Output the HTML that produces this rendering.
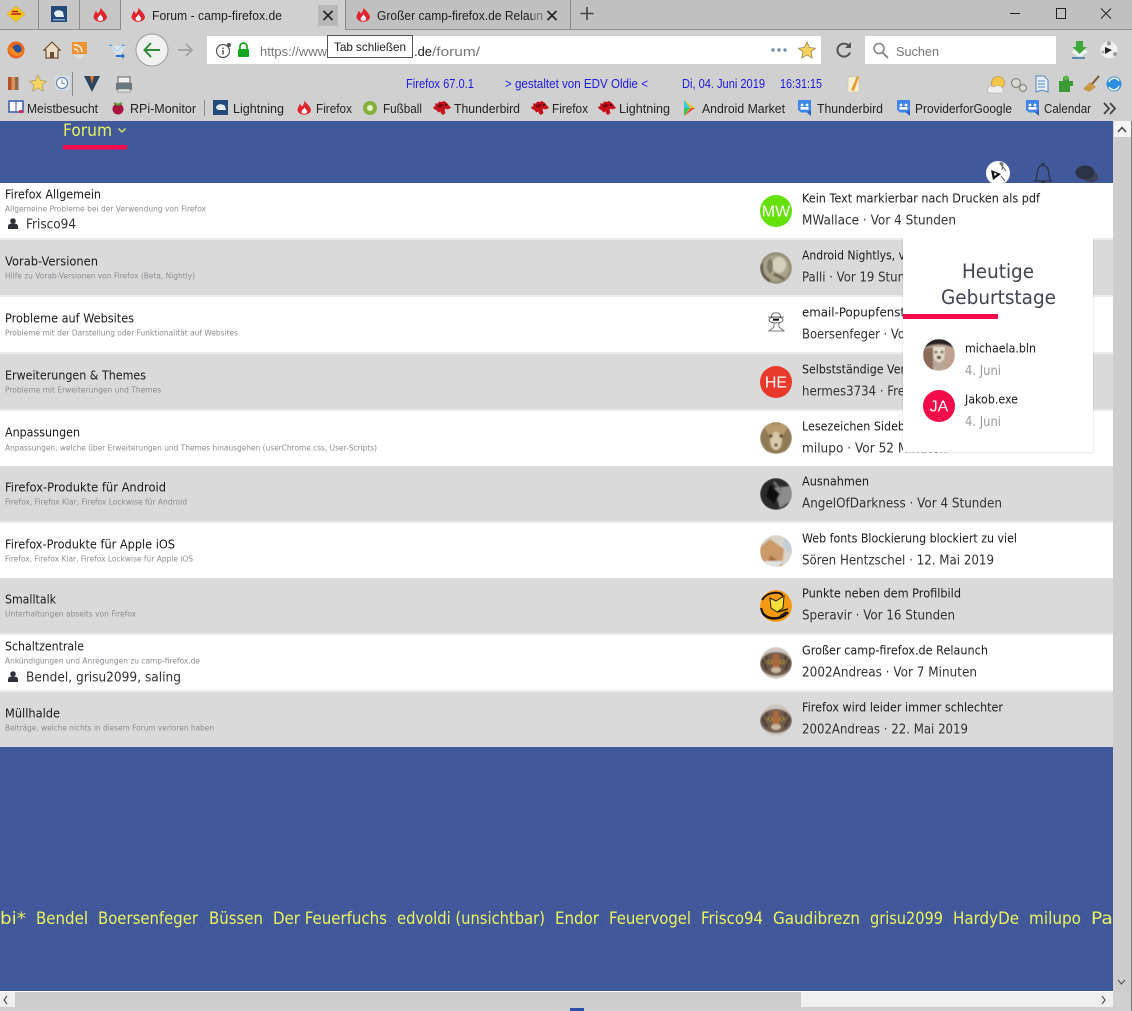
<!DOCTYPE html>
<html lang="de">
<head>
<meta charset="utf-8">
<title>Forum - camp-firefox.de</title>
<style>
html,body{margin:0;padding:0;width:1132px;height:1011px;overflow:hidden;background:#d0d0d0}
svg{display:block}
text{white-space:pre}
.u{font-family:"Liberation Sans",sans-serif;font-size:13px;fill:#222}
.b{font-family:"Liberation Sans",sans-serif;font-size:13px;fill:#1a1ae0}
.t{font-family:"DejaVu Sans",sans-serif;font-size:12px;fill:#1a1a1a;transform:translateY(-.7px)}
.s{font-family:"DejaVu Sans",sans-serif;font-size:8px;fill:#8b8b93;transform:translateY(-.3px)}
.m{font-family:"DejaVu Sans",sans-serif;font-size:13px;fill:#333;transform:translateY(-.5px)}
.y{font-family:"DejaVu Sans",sans-serif;font-size:16.5px;fill:#e9f35f}
.c{font-family:"DejaVu Sans",sans-serif;font-size:8px;fill:#2f3d66}
.a{font-family:"Liberation Sans",sans-serif;font-size:16px;fill:#fff;text-anchor:middle}
.h{font-family:"DejaVu Sans",sans-serif;font-size:19.5px;fill:#3f4450}
.g{font-family:"DejaVu Sans",sans-serif;font-size:13px;fill:#9a9a9a}
</style>
</head>
<body>
<svg width="1132" height="1011" viewBox="0 0 1132 1011" xmlns="http://www.w3.org/2000/svg">
<defs>
<filter id="bl" x="-10%" y="-10%" width="120%" height="120%"><feGaussianBlur stdDeviation=".7"/></filter>
<g id="flame"><path d="M8.500 0C9 3 14.500 5.500 15 10.500A7 6 0 0 1 1.500 10.500C1.500 8 3 6.500 3.500 4C4.800 4.800 5.500 5.800 5.800 6.800C7.500 5 8.500 3 8.500 0Z" fill="#e2222c"/><path d="M8.500 7C9 9 11.200 9.800 11.200 12A3 2.800 0 0 1 5.500 12C5.500 10.200 8 9.200 8.500 7Z" fill="#fff"/></g>
<g id="dino"><path d="M1 9L0 7L2.500 6L2 3.500L5 3.500L6 1.500L8.500 2L11 1L14 3L16 5.500L18 8L14.500 9.500L12.500 8.500L11.500 10L12.500 13L10 15L8 13.500L7.500 11.500L5 12.500L4 10.500Z" fill="#c8101a"/><path d="M4 5L8 4L11 4.500L9 7L6 8Z" fill="#7c0c10"/><circle cx="13" cy="5" r="1" fill="#200"/></g>
<g id="cal"><path d="M0 0H13V15L10 12.500H3L0 10Z" fill="#4285e8"/><path d="M13 10V16L9 12.500Z" fill="#2a62c0"/><circle cx="4" cy="5" r="1.400" fill="#fff"/><circle cx="9" cy="5" r="1.400" fill="#fff"/><rect x="2.500" y="7" width="8" height="2.600" fill="#fff"/></g>
<g id="user"><circle cx="5" cy="3" r="2.800" fill="#2e3038"/><path d="M0 11V8.500C0 6.400 2 5.600 3 5.600H7C8 5.600 10 6.400 10 8.500V11Z" fill="#2e3038"/></g>
<g id="cat"><circle r="16" fill="#cfc8c0"/><ellipse cx="0" cy="1" rx="16" ry="12" fill="#6e5a48"/><path d="M-3 -9L3 -9L4 4L0 9L-4 4Z" fill="#a9683e"/><ellipse cx="-6" cy="-1" rx="2.500" ry="2" fill="#b9a24a"/><ellipse cx="6" cy="-1" rx="2.500" ry="2" fill="#b9a24a"/><circle cx="-6" cy="-1" r="1.200" fill="#111"/><circle cx="6" cy="-1" r="1.200" fill="#111"/><path d="M-14 -3L-9 7M14 -3L9 7M-10 -8L-9 -3M10 -8L9 -3" stroke="#3a2d22" stroke-width="1.500"/><ellipse cx="0" cy="7" rx="5" ry="3" fill="#c9b8a4"/></g>
<clipPath id="ca"><circle cx="0" cy="0" r="16"/></clipPath>
<clipPath id="tp"><rect x="980" y="150" width="40" height="33"/></clipPath>
</defs>

<!-- browser chrome -->
<rect x="0" y="0" width="1132" height="122" fill="#d0d0d0"/>
<rect x="0" y="0" width="1132" height="29" fill="#c0c0c0"/>
<rect x="0" y="29" width="1132" height="1" fill="#8f8f8f"/>
<rect x="0" y="0" width="120" height="29" fill="#c6c6c6"/>
<rect x="38" y="0" width="1" height="29" fill="#8a8a8a"/>
<rect x="79" y="0" width="1" height="29" fill="#8a8a8a"/>
<rect x="120" y="0" width="226" height="30" fill="#d0d0d0"/>
<rect x="120" y="0" width="1" height="30" fill="#8a8a8a"/>
<rect x="345" y="0" width="1" height="30" fill="#8a8a8a"/>
<rect x="570" y="0" width="1" height="29" fill="#8a8a8a"/>
<!-- pinned -->
<path d="M16 6L25 14L16 22L7 14Z" fill="#f4c51e" stroke="#d8a010" stroke-width=".5"/><path d="M11 14H21M12 11.500H18" stroke="#c41a1a" stroke-width="1.600"/>
<rect x="51" y="6" width="16" height="16" fill="#234a78"/><path d="M54 14C54 10 60 9 63 12L64 17H56Z" fill="#e6eef6"/><rect x="53" y="19" width="12" height="1.500" fill="#7fa0c0"/>
<use href="#flame" x="92" y="7"/>
<use href="#flame" x="130" y="7"/>
<text class="u" x="152" y="20" textLength="130" lengthAdjust="spacingAndGlyphs">Forum - camp-firefox.de</text>
<rect x="318" y="5" width="20" height="21" fill="#b8b8b8"/>
<path d="M323.500 11L332.500 20M332.500 11L323.500 20" stroke="#222" stroke-width="1.600"/>
<use href="#flame" x="355" y="7"/>
<text class="u" x="377" y="20" textLength="166" lengthAdjust="spacingAndGlyphs">Großer camp-firefox.de Relaun</text>
<rect x="533" y="6" width="12" height="18" fill="#c0c0c0" opacity=".5"/>
<path d="M547.500 11L556.500 20M556.500 11L547.500 20" stroke="#222" stroke-width="1.600"/>
<path d="M587 7V20M580.500 13.500H593.500" stroke="#444" stroke-width="1.600"/>
<path d="M1010 13.500H1020" stroke="#222" stroke-width="1"/>
<rect x="1056.500" y="8.500" width="9" height="10" fill="none" stroke="#222" stroke-width="1"/>
<path d="M1101 8.500L1111 18.500M1111 8.500L1101 18.500" stroke="#222" stroke-width="1"/>

<!-- toolbar row -->
<circle cx="16" cy="50" r="8.500" fill="#e8671c"/><circle cx="17" cy="49" r="4.500" fill="#27509c"/><path d="M8 46C10 58 22 60 25 48C23 54 15 54 14 49Z" fill="#f08a1d"/>
<path d="M44 50L52 42L60 50H58V58H46V50Z" fill="#e9dcc4" stroke="#6a4c30" stroke-width="1.200"/><rect x="50" y="52" width="4" height="6" fill="#6a4c30"/>
<rect x="72" y="42" width="15" height="12" fill="#f09433"/><path d="M74 45A7 7 0 0 1 82 52M74 49A3.500 3.500 0 0 1 78 52" stroke="#fff" stroke-width="1.300" fill="none"/><path d="M74 55H85L82 58H77Z" fill="#e0e0e0"/>
<path d="M110 45L117 51L124 45" stroke="#3d8fd8" stroke-width="2" fill="none"/><path d="M110 46L116 54H121L125 46" fill="#dfe9f2" opacity=".8"/><path d="M116 55H122V53L125 56L122 59V57H116Z" fill="#2a6fc0"/>
<circle cx="152" cy="50" r="16" fill="#f1f1f1" stroke="#9a9a9a"/>
<path d="M144.500 50H160M151 43L144.500 50L151 57" stroke="#2f8b3a" stroke-width="2" fill="none"/>
<path d="M178 50H192M186 44L192 50L186 56" stroke="#a3a3a3" stroke-width="1.800" fill="none"/>
<rect x="207" y="36" width="614" height="28" fill="#fff"/>
<circle cx="223" cy="51" r="6.500" fill="none" stroke="#555" stroke-width="1.200"/><rect x="222.300" y="50" width="1.500" height="4.500" fill="#555"/><rect x="222.300" y="47.500" width="1.500" height="1.500" fill="#555"/><circle cx="229" cy="45" r="2" fill="#555"/>
<rect x="238" y="49" width="11" height="8" rx="1" fill="#12a81f"/><path d="M240 49V46.500A3.500 3.500 0 0 1 247 46.500V49" stroke="#12a81f" stroke-width="1.700" fill="none"/>
<text class="u" x="260" y="56" textLength="67" lengthAdjust="spacingAndGlyphs" style="fill:#777">https://www</text>
<text class="u" x="414" y="56" textLength="18" lengthAdjust="spacingAndGlyphs">.de</text>
<text class="u" x="432" y="56" textLength="48" lengthAdjust="spacingAndGlyphs" style="fill:#777">/forum/</text>
<rect x="327.500" y="35.500" width="85" height="22" fill="#fff" stroke="#555"/>
<text class="u" x="334" y="51" textLength="72" lengthAdjust="spacingAndGlyphs" style="font-size:12px">Tab schließen</text>
<circle cx="773" cy="50" r="1.700" fill="#6f8fb0"/><circle cx="779" cy="50" r="1.700" fill="#6f8fb0"/><circle cx="785" cy="50" r="1.700" fill="#6f8fb0"/>
<path d="M807 42L809.500 47.500L815.500 48.200L811 52L812.300 58L807 55L801.700 58L803 52L798.500 48.200L804.500 47.500Z" fill="#f7d05c" stroke="#8a7a50" stroke-width=".7"/>
<path d="M849 46A6.500 6.500 0 1 0 850 52.500" stroke="#555" stroke-width="2" fill="none"/><path d="M845 48H851V42Z" fill="#555"/>
<rect x="865" y="36" width="191" height="28" fill="#fff"/>
<circle cx="879" cy="48.500" r="5" fill="none" stroke="#808080" stroke-width="1.500"/><path d="M882.500 52.500L888 58" stroke="#808080" stroke-width="1.800"/>
<text class="u" x="896" y="56" textLength="43" lengthAdjust="spacingAndGlyphs" style="fill:#777">Suchen</text>
<path d="M1071 52L1080 46L1088 52L1080 57Z" fill="#f0f4f0"/><path d="M1076 41H1083V47H1087L1079.500 54L1072.500 47H1076Z" fill="#3fa83a"/><rect x="1072" y="57" width="13" height="2" fill="#5a8ab0"/>
<circle cx="1109" cy="50" r="8.500" fill="#f0f0f0"/><path d="M1105 47L1112 50L1105 54Z" fill="#222"/><circle cx="1109" cy="43.500" r="2" fill="#999"/><circle cx="1115" cy="54" r="2" fill="#999"/><circle cx="1103" cy="52" r="1.500" fill="#aaa"/>

<!-- third row -->
<rect x="8" y="77" width="3.500" height="13" fill="#b5502a"/><rect x="11.500" y="77" width="3.500" height="13" fill="#d8925a"/><rect x="15" y="77" width="3.500" height="13" fill="#8a6a4a"/>
<path d="M38 75L40.500 80.500L46.500 81.200L42 85L43.300 91L38 88L32.700 91L34 85L29.500 81.200L35.500 80.500Z" fill="#f7d560" stroke="#a89a60" stroke-width=".7"/>
<rect x="55" y="76" width="15" height="14" rx="2" fill="#d5dde6"/><circle cx="62" cy="83" r="5.500" fill="#fff" stroke="#6a8ab0" stroke-width="1.200"/><path d="M62 79.500V83L65 84" stroke="#6a8ab0" fill="none"/>
<rect x="72" y="72" width="1" height="24" fill="#8a8a8a"/>
<path d="M84 76H100L92 92Z" fill="#2b4560"/><path d="M90 76L92 84L94 76Z" fill="#e8752a"/>
<rect x="118" y="77" width="12" height="6" fill="#f0f0f0" stroke="#666"/><rect x="116" y="83" width="16" height="7" fill="#6c7880"/><rect x="118" y="89" width="12" height="3" fill="#dfe6e0" stroke="#777" stroke-width=".6"/>
<text class="b" x="406" y="88" textLength="68" lengthAdjust="spacingAndGlyphs">Firefox 67.0.1</text>
<text class="b" x="505" y="88" textLength="143" lengthAdjust="spacingAndGlyphs">&gt; gestaltet von EDV Oldie &lt;</text>
<text class="b" x="682" y="88" textLength="83" lengthAdjust="spacingAndGlyphs">Di, 04. Juni 2019</text>
<text class="b" x="780" y="88" textLength="42" lengthAdjust="spacingAndGlyphs">16:31:15</text>
<rect x="848" y="77" width="11" height="15" fill="#f5f0d8" stroke="#c8c0a0" stroke-width=".6"/><path d="M851 90L857 76L859 77L854 91Z" fill="#e89a2a"/>
<circle cx="998" cy="83" r="6.500" fill="#f5c648" stroke="#b89a50" stroke-width=".8"/><path d="M988 92C986 87 991 85 994 87C997 84 1003 86 1003 90C1005 91 1003 93 1001 93H990Z" fill="#eee" stroke="#aaa" stroke-width=".6"/>
<circle cx="1016" cy="83" r="4.500" fill="#d8d8d0" stroke="#8a8a80" stroke-width="1.300"/><circle cx="1023" cy="88" r="3.500" fill="#d8d8d0" stroke="#8a8a80" stroke-width="1.200"/>
<path d="M1036 76H1044L1048 80V92L1042 90L1036 92Z" fill="#e6eef8" stroke="#5a86c4" stroke-width="1"/><path d="M1038 81H1045M1038 84H1045M1038 87H1045" stroke="#5a86c4"/>
<path d="M1059 81H1063V77H1069V81H1073V86H1070V92H1059Z" fill="#3c9a34"/><circle cx="1066" cy="78" r="2.500" fill="#56b84a"/>
<path d="M1083 89L1090 82L1096 87L1089 92Z" fill="#c89a48"/><path d="M1092 84L1099 76" stroke="#7a5a30" stroke-width="2"/>
<circle cx="1114" cy="84" r="7.500" fill="#2d8ee0"/><path d="M1109 82A5.500 5.500 0 0 1 1119 81" stroke="#fff" stroke-width="1.500" fill="none"/><path d="M1119 86A5.500 5.500 0 0 1 1109 87" stroke="#fff" stroke-width="1.500" fill="none"/>

<!-- bookmarks -->
<rect x="9" y="101" width="14" height="11" fill="#fff" stroke="#3458a8" stroke-width="1.500"/><path d="M16 101V112" stroke="#3458a8"/><rect x="19" y="110" width="4" height="3" fill="#d0304a"/>
<text class="u" x="27" y="113" textLength="71" lengthAdjust="spacingAndGlyphs">Meistbesucht</text>
<circle cx="118" cy="109" r="5.500" fill="#a8123c"/><path d="M114 103L118 105L122 103" stroke="#5a9a38" stroke-width="2" fill="none"/>
<text class="u" x="130" y="113" textLength="66" lengthAdjust="spacingAndGlyphs">RPi-Monitor</text>
<rect x="204" y="100" width="1" height="16" fill="#8a8a8a"/>
<rect x="213" y="100" width="15" height="15" fill="#234a78"/><path d="M216 108C216 104 222 103 225 106L226 110H218Z" fill="#e6eef6"/>
<text class="u" x="233" y="113" textLength="51" lengthAdjust="spacingAndGlyphs">Lightning</text>
<use href="#flame" x="296" y="100"/>
<text class="u" x="316" y="113" textLength="36" lengthAdjust="spacingAndGlyphs">Firefox</text>
<circle cx="370" cy="108" r="7" fill="#86b03a"/><circle cx="370" cy="108" r="3" fill="#e4f0c8"/>
<text class="u" x="383" y="113" textLength="39" lengthAdjust="spacingAndGlyphs">Fußball</text>
<use href="#dino" x="433" y="100"/>
<text class="u" x="454" y="113" textLength="66" lengthAdjust="spacingAndGlyphs">Thunderbird</text>
<use href="#dino" x="531" y="100"/>
<text class="u" x="552" y="113" textLength="36" lengthAdjust="spacingAndGlyphs">Firefox</text>
<use href="#dino" x="598" y="100"/>
<text class="u" x="619" y="113" textLength="51" lengthAdjust="spacingAndGlyphs">Lightning</text>
<path d="M684 100V108L691 108Z" fill="#36c8f0"/><path d="M684 116V108L691 108Z" fill="#3ec45a"/><path d="M684 100L695 108L684 116L690 108Z" fill="#f2c12e"/><path d="M684 116L691 108L695 108Z" fill="#e8453c"/>
<text class="u" x="702" y="113" textLength="83" lengthAdjust="spacingAndGlyphs">Android Market</text>
<use href="#cal" x="798" y="100"/>
<text class="u" x="817" y="113" textLength="66" lengthAdjust="spacingAndGlyphs">Thunderbird</text>
<use href="#cal" x="897" y="100"/>
<text class="u" x="915" y="113" textLength="97" lengthAdjust="spacingAndGlyphs">ProviderforGoogle</text>
<use href="#cal" x="1026" y="100"/>
<text class="u" x="1044" y="113" textLength="47" lengthAdjust="spacingAndGlyphs">Calendar</text>
<path d="M1104 103L1109 108.500L1104 114M1110 103L1115 108.500L1110 114" stroke="#444" stroke-width="1.800" fill="none"/>

<!-- page -->
<rect x="0" y="121" width="1113" height="871" fill="#41589a"/>
<rect x="1113" y="121" width="19" height="871" fill="#cdcdcd"/>
<rect x="1114" y="121" width="17" height="16" fill="#f4f4f4"/>
<path d="M1118 132L1122 127.500L1126 132" stroke="#444" stroke-width="1.500" fill="none"/>
<rect x="1131" y="121" width="1" height="890" fill="#77807a"/>
<text class="y" x="63" y="136" textLength="49" lengthAdjust="spacingAndGlyphs">Forum</text>
<path d="M118.500 128.500L122 132L125.500 128.500" stroke="#e9f35f" stroke-width="1.300" fill="none"/>
<rect x="63" y="145" width="64" height="4.500" fill="#f50a4a"/>
<!-- header icons -->
<g clip-path="url(#tp)"><circle cx="998" cy="173" r="12" fill="#fff"/><path d="M991 170L1001 174L993 180Z" fill="#111"/><path d="M994 172.500L997 174L994.500 176Z" fill="#fff"/><path d="M1000 163L1006 171M1003 163L1002 170M1001 176L1005 181" stroke="#666" stroke-width="1.100"/><circle cx="1001" cy="163.500" r="1.500" fill="#777"/></g>
<path d="M1035 181C1037.500 178 1037 174 1037.500 171C1038 167 1041 165.500 1043 165.500C1045 165.500 1048 167 1048.500 171C1049 174 1048.500 178 1051 181Z" fill="none" stroke="#2c3344" stroke-width="1.300"/><rect x="1041.500" y="163" width="3" height="2" fill="#2c3344"/><rect x="1041" y="181" width="4" height="2" fill="#2c3344"/>
<ellipse cx="1091" cy="177" rx="7" ry="5.500" fill="#3a435c"/><ellipse cx="1085" cy="172.500" rx="9.500" ry="7" fill="#2c3344"/>

<!-- rows -->
<rect x="0" y="183" width="1113" height="564" fill="#ececec"/>
<rect x="0" y="183" width="1113" height="55" fill="#fff"/>
<rect x="0" y="240" width="1113" height="55" fill="#dadada"/>
<rect x="0" y="297" width="1113" height="55" fill="#fff"/>
<rect x="0" y="354" width="1113" height="55" fill="#dadada"/>
<rect x="0" y="411" width="1113" height="55" fill="#fff"/>
<rect x="0" y="466" width="1113" height="55" fill="#dadada"/>
<rect x="0" y="523" width="1113" height="55" fill="#fff"/>
<rect x="0" y="578" width="1113" height="55" fill="#dadada"/>
<rect x="0" y="635" width="1113" height="55" fill="#fff"/>
<rect x="0" y="692" width="1113" height="55" fill="#dadada"/>

<text class="t" x="5" y="199" textLength="96" lengthAdjust="spacingAndGlyphs">Firefox Allgemein</text>
<text class="s" x="5" y="212" textLength="201" lengthAdjust="spacingAndGlyphs">Allgemeine Probleme bei der Verwendung von Firefox</text>
<use href="#user" x="8" y="218"/>
<text class="m" x="26" y="229" textLength="50" lengthAdjust="spacingAndGlyphs">Frisco94</text>
<text class="t" x="5" y="266" textLength="93" lengthAdjust="spacingAndGlyphs">Vorab-Versionen</text>
<text class="s" x="5" y="279" textLength="190" lengthAdjust="spacingAndGlyphs">Hilfe zu Vorab-Versionen von Firefox (Beta, Nightly)</text>
<text class="t" x="5" y="323" textLength="129" lengthAdjust="spacingAndGlyphs">Probleme auf Websites</text>
<text class="s" x="5" y="336" textLength="233" lengthAdjust="spacingAndGlyphs">Probleme mit der Darstellung oder Funktionalität auf Websites</text>
<text class="t" x="5" y="380" textLength="141" lengthAdjust="spacingAndGlyphs">Erweiterungen &amp; Themes</text>
<text class="s" x="5" y="393" textLength="156" lengthAdjust="spacingAndGlyphs">Probleme mit Erweiterungen und Themes</text>
<text class="t" x="5" y="437" textLength="75" lengthAdjust="spacingAndGlyphs">Anpassungen</text>
<text class="s" x="5" y="451" textLength="372" lengthAdjust="spacingAndGlyphs">Anpassungen, welche über Erweiterungen und Themes hinausgehen (userChrome.css, User-Scripts)</text>
<text class="t" x="5" y="492" textLength="161" lengthAdjust="spacingAndGlyphs">Firefox-Produkte für Android</text>
<text class="s" x="5" y="505" textLength="182" lengthAdjust="spacingAndGlyphs">Firefox, Firefox Klar, Firefox Lockwise für Android</text>
<text class="t" x="5" y="549" textLength="170" lengthAdjust="spacingAndGlyphs">Firefox-Produkte für Apple iOS</text>
<text class="s" x="5" y="562" textLength="188" lengthAdjust="spacingAndGlyphs">Firefox, Firefox Klar, Firefox Lockwise für Apple iOS</text>
<text class="t" x="5" y="604" textLength="51" lengthAdjust="spacingAndGlyphs">Smalltalk</text>
<text class="s" x="5" y="617" textLength="131" lengthAdjust="spacingAndGlyphs">Unterhaltungen abseits von Firefox</text>
<text class="t" x="5" y="651" textLength="79" lengthAdjust="spacingAndGlyphs">Schaltzentrale</text>
<text class="s" x="5" y="664" textLength="195" lengthAdjust="spacingAndGlyphs">Ankündigungen und Anregungen zu camp-firefox.de</text>
<use href="#user" x="8" y="671"/>
<text class="m" x="26" y="682" textLength="155" lengthAdjust="spacingAndGlyphs">Bendel, grisu2099, saling</text>
<text class="t" x="5" y="718" textLength="55" lengthAdjust="spacingAndGlyphs">Müllhalde</text>
<text class="s" x="5" y="731" textLength="209" lengthAdjust="spacingAndGlyphs">Beiträge, welche nichts in diesem Forum verloren haben</text>

<!-- avatars -->
<circle cx="776" cy="211" r="16" fill="#66e009"/><text class="a" x="776" y="216.500">MW</text>
<g transform="translate(776,268)" clip-path="url(#ca)"><g filter="url(#bl)"><circle r="16" fill="#8f8a72"/><circle r="13.500" fill="#a9a38a"/><ellipse cx="3" cy="-3" rx="7" ry="8" fill="#d4d0bc"/><ellipse cx="-6" cy="-2" rx="3" ry="7" fill="#7e7a64"/><path d="M-14 -4A15 15 0 0 0 -6 13" stroke="#5e5a48" stroke-width="3" fill="none"/><path d="M-2 6L8 11" stroke="#6a6650" stroke-width="3"/></g></g>
<g transform="translate(776,322)"><path d="M-8 -5H8M-5 -5L-3 -9H3L5 -5" fill="#fff" stroke="#444" stroke-width=".8"/><ellipse cx="0" cy="-2" rx="7" ry="3" fill="#fff" stroke="#444" stroke-width=".8"/><rect x="-3" y="-3.500" width="6" height="2.200" fill="#111"/><path d="M-2 1V5L-7 9H8L3 5V1Z" fill="#fff" stroke="#555" stroke-width=".8"/></g>
<circle cx="776" cy="382" r="16" fill="#e8392a"/><text class="a" x="776" y="387.500">HE</text>
<g transform="translate(776,438)" clip-path="url(#ca)"><g filter="url(#bl)"><circle r="16" fill="#8f7a55"/><path d="M-14 -14L0 8L14 -14Z" fill="#b89c6c"/><ellipse cx="0" cy="3" rx="6" ry="9" fill="#d8c8a8"/><circle cx="-5" cy="-2" r="1.600" fill="#3a2a1a"/><circle cx="5" cy="-2" r="1.600" fill="#3a2a1a"/><circle cx="0" cy="7" r="1.500" fill="#2a2018"/><path d="M-16 8L-6 16H6L16 8V16H-16Z" fill="#5e4c34"/></g></g>
<g transform="translate(776,494)" clip-path="url(#ca)"><g filter="url(#bl)"><circle r="16" fill="#2b2b2b"/><path d="M-2 -6L16 -8V6L4 14Z" fill="#8c8c8c"/><path d="M-6 -10L4 0L-2 10L-10 2Z" fill="#0e0e0e"/><path d="M-2 -12L6 -2" stroke="#777" stroke-width="2"/></g></g>
<g transform="translate(776,551)" clip-path="url(#ca)"><g filter="url(#bl)"><circle r="16" fill="#d8d4cc"/><path d="M-16 -4L-6 -12L8 -2L6 16H-16Z" fill="#cc9a68"/><path d="M8 -14L16 -8V2L8 -2Z" fill="#c4ccd4"/><path d="M-6 4L2 10L-8 12Z" fill="#a86c3c"/><path d="M-12 10L8 10L2 16H-8Z" fill="#dfe3e6"/></g></g>
<g transform="translate(776,606)" clip-path="url(#ca)"><circle r="16" fill="#f59a10"/><path d="M-14 -6C-8 -16 8 -14 6 -10" stroke="#1a1208" stroke-width="2" fill="none"/><path d="M-15 2C-14 14 4 16 12 6" stroke="#1a1208" stroke-width="2.500" fill="none"/><path d="M-6 -8L0 -5L8 -10L7 2L1 6L-5 2Z" fill="#f4e03a" stroke="#2a2008" stroke-width="1"/><path d="M2 6L12 3M4 10L10 6" stroke="#2a2008" stroke-width="1.500"/></g>
<g transform="translate(776,663)" clip-path="url(#ca)"><use href="#cat" filter="url(#bl)"/></g>
<g transform="translate(776,720)" clip-path="url(#ca)"><use href="#cat" filter="url(#bl)"/></g>

<!-- topics -->
<text class="t" x="802" y="203" textLength="238" lengthAdjust="spacingAndGlyphs">Kein Text markierbar nach Drucken als pdf</text>
<text class="m" x="802" y="225" textLength="154" lengthAdjust="spacingAndGlyphs">MWallace · Vor 4 Stunden</text>
<text class="t" x="802" y="260" textLength="103" lengthAdjust="spacingAndGlyphs">Android Nightlys, v</text>
<text class="m" x="802" y="282" textLength="103" lengthAdjust="spacingAndGlyphs">Palli · Vor 19 Stun</text>
<text class="t" x="802" y="317" textLength="103" lengthAdjust="spacingAndGlyphs">email-Popupfenst</text>
<text class="m" x="802" y="339" textLength="103" lengthAdjust="spacingAndGlyphs">Boersenfeger · Vo</text>
<text class="t" x="802" y="374" textLength="103" lengthAdjust="spacingAndGlyphs">Selbstständige Ver</text>
<text class="m" x="802" y="396" textLength="103" lengthAdjust="spacingAndGlyphs">hermes3734 · Fre</text>
<text class="t" x="802" y="431" textLength="103" lengthAdjust="spacingAndGlyphs">Lesezeichen Sideb</text>
<text class="m" x="802" y="453" textLength="145" lengthAdjust="spacingAndGlyphs">milupo · Vor 52 Minuten</text>
<text class="t" x="802" y="486" textLength="67" lengthAdjust="spacingAndGlyphs">Ausnahmen</text>
<text class="m" x="802" y="508" textLength="200" lengthAdjust="spacingAndGlyphs">AngelOfDarkness · Vor 4 Stunden</text>
<text class="t" x="802" y="543" textLength="215" lengthAdjust="spacingAndGlyphs">Web fonts Blockierung blockiert zu viel</text>
<text class="m" x="802" y="565" textLength="192" lengthAdjust="spacingAndGlyphs">Sören Hentzschel · 12. Mai 2019</text>
<text class="t" x="802" y="598" textLength="159" lengthAdjust="spacingAndGlyphs">Punkte neben dem Profilbild</text>
<text class="m" x="802" y="620" textLength="153" lengthAdjust="spacingAndGlyphs">Speravir · Vor 16 Stunden</text>
<text class="t" x="802" y="655" textLength="186" lengthAdjust="spacingAndGlyphs">Großer camp-firefox.de Relaunch</text>
<text class="m" x="802" y="677" textLength="175" lengthAdjust="spacingAndGlyphs">2002Andreas · Vor 7 Minuten</text>
<text class="t" x="802" y="712" textLength="201" lengthAdjust="spacingAndGlyphs">Firefox wird leider immer schlechter</text>
<text class="m" x="802" y="734" textLength="166" lengthAdjust="spacingAndGlyphs">2002Andreas · 22. Mai 2019</text>

<!-- birthday popup -->
<rect x="902" y="238" width="192" height="215.500" fill="#000" opacity=".06"/>
<rect x="903" y="238" width="190" height="214" fill="#fff"/>
<text class="h" x="962" y="278" textLength="72" lengthAdjust="spacingAndGlyphs">Heutige</text>
<text class="h" x="941" y="304" textLength="115" lengthAdjust="spacingAndGlyphs">Geburtstage</text>
<rect x="903" y="314" width="95" height="5" fill="#f50a4a"/>
<g transform="translate(939,355)" clip-path="url(#ca)"><g filter="url(#bl)"><circle r="16" fill="#b8a898"/><path d="M-16 -16H16V-6C8 -12 -8 -12 -16 -6Z" fill="#2a2420"/><path d="M-16 -6L-6 -8V16H-16Z" fill="#8a6a58"/><path d="M6 -8L16 -6V16H6Z" fill="#c0a090"/><path d="M-6 -8H6L5 4L0 8L-5 4Z" fill="#e4dccc"/><circle cx="-3" cy="-3" r="1.300" fill="#222"/><circle cx="3" cy="-3" r="1.300" fill="#222"/><path d="M-2 1H2V4H-2Z" fill="#3a2a24"/></g></g>
<text class="t" x="965" y="353" textLength="71" lengthAdjust="spacingAndGlyphs">michaela.bln</text>
<text class="g" x="965" y="375" textLength="36" lengthAdjust="spacingAndGlyphs">4. Juni</text>
<circle cx="939" cy="406" r="16" fill="#f50a4a"/><text class="a" x="939" y="411.500">JA</text>
<text class="t" x="965" y="404" textLength="53" lengthAdjust="spacingAndGlyphs">Jakob.exe</text>
<text class="g" x="965" y="426" textLength="36" lengthAdjust="spacingAndGlyphs">4. Juni</text>

<!-- footer names -->
<text class="y" x="0" y="924" textLength="26" lengthAdjust="spacingAndGlyphs">bi*</text>
<text class="c" x="28" y="926">,</text>
<text class="y" x="36" y="924" textLength="52" lengthAdjust="spacingAndGlyphs">Bendel</text>
<text class="c" x="90" y="926">,</text>
<text class="y" x="98" y="924" textLength="100" lengthAdjust="spacingAndGlyphs">Boersenfeger</text>
<text class="c" x="200" y="926">,</text>
<text class="y" x="209" y="924" textLength="54" lengthAdjust="spacingAndGlyphs">Büssen</text>
<text class="c" x="265" y="926">,</text>
<text class="y" x="273" y="924" textLength="114" lengthAdjust="spacingAndGlyphs">Der Feuerfuchs</text>
<text class="c" x="389" y="926">,</text>
<text class="y" x="397" y="924" textLength="148" lengthAdjust="spacingAndGlyphs">edvoldi (unsichtbar)</text>
<text class="c" x="547" y="926">,</text>
<text class="y" x="555" y="924" textLength="44" lengthAdjust="spacingAndGlyphs">Endor</text>
<text class="c" x="601" y="926">,</text>
<text class="y" x="609" y="924" textLength="82" lengthAdjust="spacingAndGlyphs">Feuervogel</text>
<text class="c" x="693" y="926">,</text>
<text class="y" x="701" y="924" textLength="62" lengthAdjust="spacingAndGlyphs">Frisco94</text>
<text class="c" x="765" y="926">,</text>
<text class="y" x="773" y="924" textLength="87" lengthAdjust="spacingAndGlyphs">Gaudibrezn</text>
<text class="c" x="862" y="926">,</text>
<text class="y" x="870" y="924" textLength="73" lengthAdjust="spacingAndGlyphs">grisu2099</text>
<text class="c" x="945" y="926">,</text>
<text class="y" x="953" y="924" textLength="66" lengthAdjust="spacingAndGlyphs">HardyDe</text>
<text class="c" x="1021" y="926">,</text>
<text class="y" x="1029" y="924" textLength="52" lengthAdjust="spacingAndGlyphs">milupo</text>
<text class="c" x="1083" y="926">,</text>
<text class="y" x="1091" y="924" textLength="27" lengthAdjust="spacingAndGlyphs">Pal</text>
<rect x="1113" y="900" width="18" height="70" fill="#cdcdcd"/>
<path d="M1118 980L1121.500 984L1125 980" stroke="#555" stroke-width="1.200" fill="none"/>

<!-- horizontal scrollbar -->
<rect x="0" y="991" width="1113" height="16" fill="#f0f0f0"/>
<rect x="0" y="991" width="1113" height="1" fill="#fff"/>
<rect x="15" y="992" width="786" height="15" fill="#cdcdcd"/>
<path d="M7 996L4 1000L7 1004" stroke="#555" stroke-width="1.200" fill="none"/>
<path d="M1102 996L1105 1000L1102 1004" stroke="#555" stroke-width="1.200" fill="none"/>
<rect x="0" y="1007" width="1131" height="4" fill="#cfcfcf"/>
<rect x="570" y="1008" width="14" height="3" fill="#2a50a8"/>
</svg>
</body>
</html>
